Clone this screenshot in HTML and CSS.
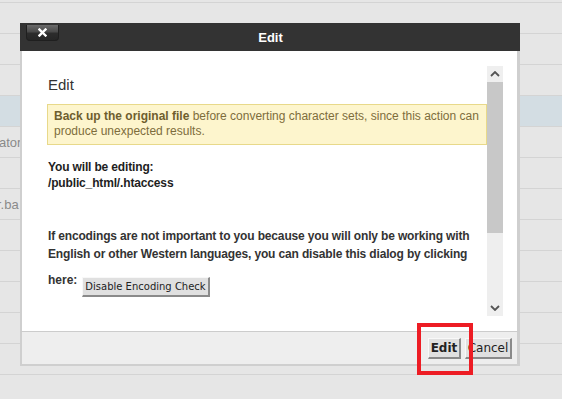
FILE: index.html
```html
<!DOCTYPE html>
<html lang="en">
<head>
  <meta charset="UTF-8">
  <meta name="viewport" content="width=device-width, initial-scale=1.0">
  <title>Edit</title>
  <link rel="stylesheet" href="styles.css">
</head>
<body>
  <div class="file-list">
    <div class="file-row"></div>
    <div class="file-row"></div>
    <div class="file-row"></div>
    <div class="file-row file-row-selected"></div>
    <div class="file-row"><span class="file-name">ator</span></div>
    <div class="file-row"></div>
    <div class="file-row"><span class="file-name file-name-cut">r.ba</span></div>
    <div class="file-row"></div>
    <div class="file-row"></div>
    <div class="file-row"></div>
    <div class="file-row"></div>
    <div class="file-row"></div>
    <div class="file-row"></div>
  </div>

  <div class="edit-dialog">
    <div class="edit-dialog-titlebar">
      <div class="edit-dialog-close">
        <svg width="9" height="9" viewBox="0 0 9 9"><path d="M1.5 1.5 L7.5 7.5 M7.5 1.5 L1.5 7.5" stroke="#fff" stroke-width="2.4" stroke-linecap="square"/></svg>
      </div>
      <span class="edit-dialog-title">Edit</span>
    </div>
    <div class="edit-dialog-body">
      <div class="edit-dialog-scroll">
        <div class="edit-dialog-content">
          <h2>Edit</h2>
          <div class="edit-dialog-notice">
            <b>Back up the original file</b> before converting character sets, since this action can produce unexpected results.
          </div>
          <p class="edit-dialog-file">You will be editing:<br>/public_html/.htaccess</p>
          <p class="edit-dialog-info">If encodings are not important to you because you will only be working with English or other Western languages, you can disable this dialog by clicking</p>
          <div class="edit-dialog-disable">
            <span>here:</span>
            <button class="legacy-button disable-button">Disable Encoding Check</button>
          </div>
        </div>
        <div class="fake-scrollbar">
          <div class="fake-scrollbar-arrow">
            <svg width="10" height="6" viewBox="0 0 10 6"><path d="M1 5 L5 1 L9 5" fill="none" stroke="#555" stroke-width="1.8"/></svg>
          </div>
          <div class="fake-scrollbar-thumb"></div>
          <div class="fake-scrollbar-track"></div>
          <div class="fake-scrollbar-arrow">
            <svg width="10" height="6" viewBox="0 0 10 6"><path d="M1 1 L5 5 L9 1" fill="none" stroke="#555" stroke-width="1.8"/></svg>
          </div>
        </div>
      </div>
    </div>
    <div class="edit-dialog-footer">
      <button class="legacy-button edit-button">Edit</button>
      <button class="legacy-button cancel-button">Cancel</button>
    </div>
  </div>

  <div class="highlight-box"></div>
</body>
</html>
```

FILE: styles.css
```css
body {
  margin: 0;
  background-color: #e6e6e6;
  font-family: "Liberation Sans", Arial, sans-serif;
  overflow: hidden;
  width: 562px;
  height: 399px;
  position: relative;
}

.file-list {
  padding-top: 2px;
}

.file-list .file-row:first-child {
  border-top: 1px solid #d4d4d4;
}

.file-row {
  height: 30px;
  border-bottom: 1px solid #d4d4d4;
  display: flex;
  align-items: center;
  font-size: 13px;
  color: #8a8a8a;
}

.file-row-selected {
  background-color: #d3dde3;
}

.file-name {
  margin-left: -1px;
}

.file-name-cut {
  margin-left: -3px;
}

.edit-dialog {
  position: absolute;
  left: 20px;
  top: 23px;
  width: 500px;
  display: flex;
  flex-direction: column;
}

.edit-dialog-titlebar {
  height: 28px;
  background-color: #333333;
  display: flex;
  align-items: center;
  justify-content: center;
  position: relative;
}

.edit-dialog-title {
  color: #ffffff;
  font-weight: bold;
  font-size: 13px;
  margin-left: 1px;
}

.edit-dialog-close {
  position: absolute;
  left: 6px;
  top: 2px;
  width: 33px;
  height: 16px;
  box-sizing: border-box;
  border: 1px solid #1f1f1f;
  border-top: none;
  border-radius: 0 0 4px 4px;
  background: linear-gradient(#6a6a6a, #4a4a4a 45%, #2c2c2c 55%, #262626);
  display: flex;
  align-items: center;
  justify-content: center;
}

.edit-dialog-body {
  background-color: #ffffff;
  border-left: 2px solid #cfcfcf;
  border-right: 3px solid #cfcfcf;
  padding: 15px 14px 15px 10px;
  border-bottom: 1px solid #cccccc;
}

.edit-dialog-scroll {
  display: flex;
  height: 250px;
}

.edit-dialog-content {
  flex: 1;
  padding-left: 16px;
  color: #333333;
}

.edit-dialog-content h2 {
  margin: 10px 0 0 0;
  font-size: 15px;
  font-weight: normal;
  line-height: 18px;
  color: #333;
}

.edit-dialog-notice {
  margin-top: 10px;
  margin-left: -1px;
  background-color: #fdf5cd;
  border: 1px solid #e8d98a;
  padding: 4px 6px 5px 6px;
  font-size: 12px;
  line-height: 15px;
  color: #7d6d3c;
}

.edit-dialog-notice b {
  color: #6e5e2e;
}

.edit-dialog-file {
  margin: 14px 0 0 0;
  font-size: 12px;
  font-weight: bold;
  line-height: 16px;
  color: #1e1e1e;
  letter-spacing: -0.15px;
}

.edit-dialog-info {
  margin: 36px 0 0 0;
  font-size: 12px;
  font-weight: bold;
  line-height: 18px;
  color: #333333;
  letter-spacing: -0.15px;
}

.edit-dialog-disable {
  display: flex;
  align-items: flex-start;
  margin-top: 10px;
  font-size: 12px;
  font-weight: bold;
  color: #333333;
  line-height: 14px;
}

.legacy-button {
  font-family: "DejaVu Sans", sans-serif;
  font-size: 12px;
  color: #222222;
  background-color: #e0e0e0;
  border-style: solid;
  border-width: 1px 2px 2px 1px;
  border-color: #f8f8f8 #8a8a8a #8a8a8a #f8f8f8;
  padding: 2px 3px;
  margin: 0;
  line-height: 14px;
}

.disable-button {
  font-size: 10px;
  margin-left: 5px;
  margin-top: 4px;
  padding: 2px 2px 1px 2px;
}

.edit-button {
  font-weight: bold;
  width: 33px;
  height: 21px;
  padding: 0;
}

.cancel-button {
  width: 47px;
  height: 21px;
  padding: 0;
}

.fake-scrollbar {
  width: 16px;
  display: flex;
  flex-direction: column;
  background-color: #eeeeee;
}

.fake-scrollbar-arrow {
  height: 16px;
  display: flex;
  align-items: center;
  justify-content: center;
  background-color: #efefef;
}

.fake-scrollbar-thumb {
  height: 151px;
  background-color: #c8c8c8;
}

.fake-scrollbar-track {
  flex: 1;
}

.edit-dialog-footer {
  height: 34px;
  background-color: #eeeeee;
  border-left: 2px solid #cfcfcf;
  border-right: 3px solid #cfcfcf;
  border-bottom: 2px solid #cfcfcf;
  display: flex;
  justify-content: flex-end;
  align-items: flex-start;
  gap: 4px;
  padding: 6px 5px 0 0;
  box-sizing: border-box;
}

.highlight-box {
  position: absolute;
  left: 417px;
  top: 323px;
  width: 56px;
  height: 52px;
  box-sizing: border-box;
  border: 4px solid #ed1c24;
}
```
